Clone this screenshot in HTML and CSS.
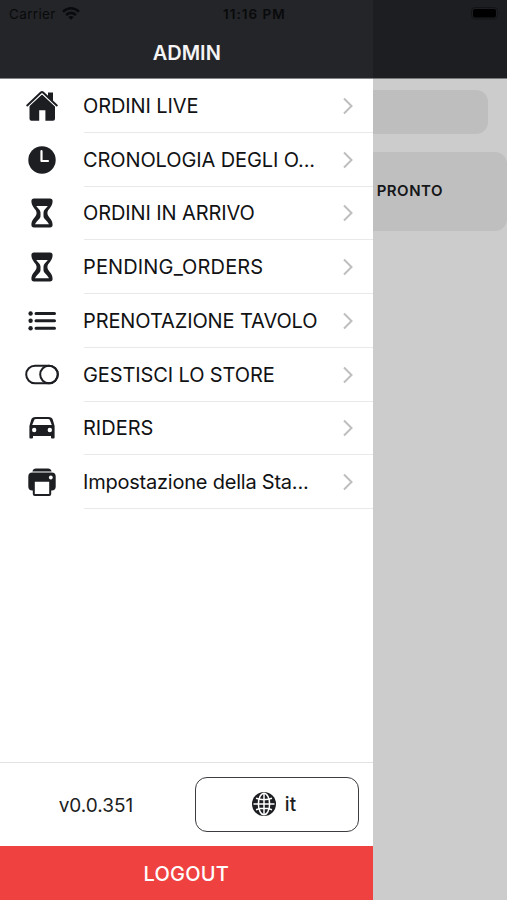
FILE: index.html
```html
<!DOCTYPE html>
<html lang="it">
<head>
<meta charset="utf-8">
<meta name="viewport" content="width=device-width, initial-scale=1">
<title>Admin</title>
<link rel="stylesheet" href="styles.css">
</head>
<body>
<svg class="defs" width="0" height="0">
  <symbol id="chevron" viewBox="0 0 12 18"><path d="M2 1.5 9.5 9 2 16.5" fill="none" stroke="#bebebf" stroke-width="2"/></symbol>
  <symbol id="hourglass" viewBox="0 0 36 36">
    <path fill="currentColor" fill-rule="evenodd" d="M10 3.600h16q2.600 0 2.600 2.600c0 6-5.200 7.800-5.200 11.800s5.200 5.800 5.200 11.800q0 2.600-2.600 2.600H10q-2.600 0-2.600-2.600c0-6 5.200-7.800 5.200-11.800S7.400 12.200 7.400 6.200Q7.400 3.600 10 3.600ZM12.200 11C14 13.300 16.500 15 16.500 17.500V21.300C16.500 24 12.900 25.500 11 29.300H25C23.100 25.500 19.500 24 19.500 21.300V17.500C19.500 15 22 13.300 23.800 11Z"/>
  </symbol>
</svg>
<div class="screen">
  <main class="page">
    <div class="page-header"></div>
    <div class="search"></div>
    <div class="status-card"><span>PRONTO</span></div>
  </main>

  <aside class="drawer">
    <header class="drawer-header"><h1>ADMIN</h1></header>
    <nav class="menu">
      <a class="item"><svg class="icon" viewBox="0 0 36 36"><path fill="currentColor" d="M18 6 31 17.600V30.800q0 2-2 2H21.400V22.200H15.200V32.800H7.500q-2 0-2-2V17.600ZM24 4.400H29V13.800L24 9.200Z"/><path d="M3.500 18.900 16.900 6.400Q18 5.400 19.100 6.400L32.500 18.900" fill="none" stroke="#fff" stroke-width="1.500"/><path d="M3.200 17.400 16.900 4.600Q18 3.600 19.100 4.600L32.800 17.400" fill="none" stroke="currentColor" stroke-width="2" stroke-linecap="round"/></svg><span class="row"><span class="label snug">ORDINI LIVE</span><svg class="chev"><use href="#chevron"/></svg></span></a>
      <a class="item"><svg class="icon" viewBox="0 0 36 36"><circle cx="18" cy="18" r="13.700" fill="currentColor"/><path d="M17.500 9.200V19H24" fill="none" stroke="#fff" stroke-width="2.200" stroke-linecap="round" stroke-linejoin="round"/></svg><span class="row"><span class="label snug">CRONOLOGIA DEGLI O...</span><svg class="chev"><use href="#chevron"/></svg></span></a>
      <a class="item"><svg class="icon"><use href="#hourglass"/></svg><span class="row"><span class="label snug">ORDINI IN ARRIVO</span><svg class="chev"><use href="#chevron"/></svg></span></a>
      <a class="item"><svg class="icon"><use href="#hourglass"/></svg><span class="row"><span class="label loose">PENDING_ORDERS</span><svg class="chev"><use href="#chevron"/></svg></span></a>
      <a class="item"><svg class="icon" viewBox="0 0 36 36"><g fill="currentColor"><circle cx="6.600" cy="10.500" r="2.200"/><circle cx="6.600" cy="17.800" r="2.200"/><circle cx="6.600" cy="25.200" r="2.200"/></g><path d="M12 10.500H30.500M12 17.800H30.500M12 25.200H30.500" stroke="currentColor" stroke-width="3" stroke-linecap="round"/></svg><span class="row"><span class="label snug">PRENOTAZIONE TAVOLO</span><svg class="chev"><use href="#chevron"/></svg></span></a>
      <a class="item"><svg class="icon" viewBox="0 0 36 36"><g fill="none" stroke="currentColor" stroke-width="2"><rect x="2.200" y="8.700" width="31.600" height="17.600" rx="8.800"/><circle cx="25" cy="17.500" r="8.800"/></g></svg><span class="row"><span class="label snug">GESTISCI LO STORE</span><svg class="chev"><use href="#chevron"/></svg></span></a>
      <a class="item"><svg class="icon" viewBox="0 0 36 36"><path fill="currentColor" fill-rule="evenodd" d="M11.500 7H24.500Q28 7 28.800 9.800L30.600 16V27.500Q30.600 28.500 29.600 28.500H28Q27 28.500 27 27.500V26H9V27.500Q9 28.500 8 28.500H6.400Q5.400 28.500 5.400 27.500V16L7.200 9.800Q8 7 11.500 7ZM10 10.400 8.200 15H27.800L26 10.400Q25.600 9 24 9H12Q10.400 9 10 10.400Z"/><circle cx="10.200" cy="20" r="2.200" fill="#fff"/><circle cx="25.800" cy="20" r="2.200" fill="#fff"/></svg><span class="row"><span class="label">RIDERS</span><svg class="chev"><use href="#chevron"/></svg></span></a>
      <a class="item"><svg class="icon" viewBox="0 0 36 36"><path fill="currentColor" d="M12 4.500H24Q27 4.500 27.600 7.600H8.400Q9 4.500 12 4.500Z"/><rect x="4.300" y="8.400" width="27.400" height="18" rx="4" fill="currentColor"/><rect x="9.800" y="16.800" width="16.400" height="14.200" rx="1" fill="#fff" stroke="currentColor" stroke-width="2"/><circle cx="26.800" cy="13.500" r="1.900" fill="#fff"/></svg><span class="row"><span class="label tight">Impostazione della Sta...</span><svg class="chev"><use href="#chevron"/></svg></span></a>
    </nav>
    <div class="tools">
      <span class="version">v0.0.351</span>
      <button class="lang"><svg class="globe" viewBox="0 0 24 24"><circle cx="12" cy="12" r="12" fill="currentColor"/><g fill="none" stroke="#fff" stroke-width="1.500"><path d="M1.500 12H22.500M12 1.500V22.500M4 6.300Q12 9 20 6.300M4 17.700Q12 15 20 17.700"/><ellipse cx="12" cy="12" rx="5.600" ry="10.800"/></g></svg><span>it</span></button>
    </div>
    <button class="logout"><span>LOGOUT</span></button>
  </aside>

  <div class="statusbar">
    <span class="carrier">Carrier</span>
    <svg class="wifi" viewBox="0 0 18 13"><g fill="none" stroke="currentColor" stroke-width="2.500"><path d="M1 4.700Q9-2.100 17 4.700M4 8Q9 3.800 14 8"/></g><path d="M6.300 10Q9 7.900 11.700 10L9 12.800Z" fill="currentColor"/></svg>
    <span class="time">11:16 PM</span>
    <svg class="battery" viewBox="0 0 30 13"><rect x=".5" y=".5" width="26" height="11.500" rx="3.500" fill="none" stroke="#131416"/><rect x="2" y="2" width="23" height="8.500" rx="2" fill="#000"/><path d="M28 4.500q1.500 1.700 0 3.500Z" fill="#131416"/></svg>
  </div>
</div>
</body>
</html>
```
FILE: styles.css
```css
* { box-sizing: border-box; }
body { margin: 0; font-family: Inter, "Liberation Sans", sans-serif; }
.defs { position: absolute; }
.screen { position: relative; width: 507px; height: 900px; overflow: hidden; }

.page { height: 900px; background: #ccc; }
.page-header { height: 79px; background: #1d1e21; border-bottom: 1px solid #77787a; }
.search { width: 468px; height: 44px; margin: 11px 0 18px 20px; border-radius: 12px; background: #bebebe; }
.status-card { width: 507px; height: 79px; padding: 29px 64px 0 0; border-radius: 12px; background: #bfbfbf; text-align: right; font-size: 15px; line-height: 19px; font-weight: 600; letter-spacing: .5px; color: #161719; }

.drawer { position: absolute; top: 0; left: 0; width: 372.500px; height: 900px; display: flex; flex-direction: column; background: #fff; color: #1c1e22; }
.drawer-header { height: 79px; padding-top: 39px; background: #242529; border-bottom: 1px solid #838487; }
h1 { margin: 0; padding-left: 1px; font-size: 20px; line-height: 28px; font-weight: 600; color: #f4f4f4; text-align: center; }
.menu { flex: 1; }
.item { display: flex; height: 53.750px; padding-left: 24px; align-items: center; }
.icon { flex: none; width: 36px; height: 36px; margin-right: 24px; }
.row { flex: 1; min-width: 0; height: 100%; display: flex; align-items: center; justify-content: space-between; padding: 1px 19px 0 0; border-bottom: 1px solid #e9e9e9; }
.label { flex: none; margin-left: -1px; white-space: nowrap; font-size: 20px; line-height: 28px; color: #111214; }
.snug { letter-spacing: -.11px; }
.loose { letter-spacing: .14px; }
.tight { letter-spacing: -.22px; }
.chev { width: 12px; height: 18px; }
.tools { height: 84px; display: flex; align-items: center; border-top: 1px solid #e2e2e2; padding-right: 13px; }
.version { width: 195px; padding: 2px 3px 0 0; text-align: center; font-size: 19px; line-height: 28px; }
.lang { width: 164px; height: 55px; display: flex; align-items: center; justify-content: center; gap: 9px; background: #fff; border: 1px solid #3c3d40; border-radius: 12px; font: 500 19px/28px Inter, sans-serif; color: #1c1e22; padding: 0 6px 2px 0; }
.lang span { padding-top: 3px; }
.globe { width: 24px; height: 24px; }
.logout { height: 54px; border: 0; padding: 1px 0 0; background: #f04141; color: #fff; font: 500 20px/28px Inter, sans-serif; letter-spacing: .2px; }

.statusbar { position: absolute; top: 0; left: 0; width: 507px; height: 27px; display: grid; grid-template-columns: 53px 161px 1fr 36px; align-items: center; padding-left: 9px; color: #090a0b; font-size: 13.500px; }
.carrier { letter-spacing: .35px; }
.wifi { width: 18px; height: 13px; }
.time { font-weight: 600; letter-spacing: 1px; }
.battery { width: 30px; height: 13px; }
```
